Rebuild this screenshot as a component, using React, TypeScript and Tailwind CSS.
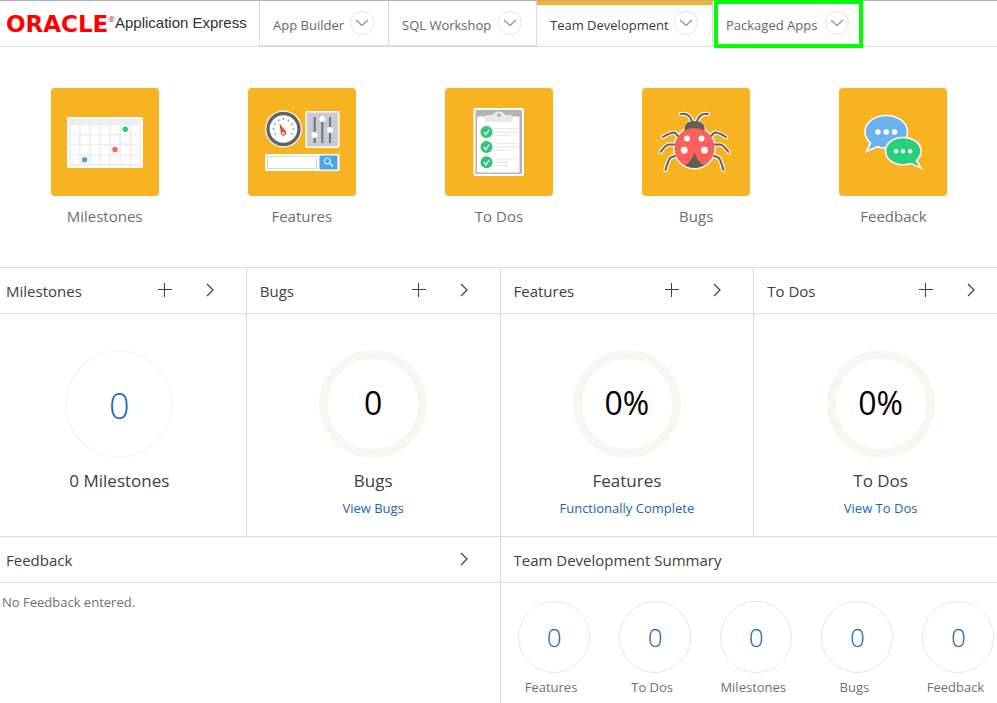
import React from "react";

function Chevron({ className = "" }: { className?: string }) {
  return (
    <svg className={className} width="8" height="14" viewBox="0 0 8 14" fill="none" stroke="currentColor" aria-hidden="true">
      <path d="M1 1 L7 7 L1 13" strokeWidth="1.2" />
    </svg>
  );
}

function Plus() {
  return (
    <svg width="14" height="14" viewBox="0 0 14 14" stroke="currentColor" aria-hidden="true">
      <path d="M0 6.5H14M6.5 0V14" strokeWidth="1" />
    </svg>
  );
}

type TabProps = { label: string; width: string; active?: boolean; highlighted?: boolean };

function Tab({ label, width, active, highlighted }: TabProps) {
  return (
    <div
      className={`relative flex shrink-0 items-center justify-between border-r border-[#dcdcdc] pl-[13px] pr-[14px] ${width} ${
        active ? "border-t-4 border-t-[#f8b323] pb-[5px]" : "border-b border-b-[#dcdcdc]"
      }`}
    >
      <a href="#" className={`pt-[3px] text-[13px] leading-[18px] whitespace-nowrap ${active ? "text-[#383838]" : "text-[#666]"}`}>
        {label}
      </a>
      <button
        type="button"
        aria-label={`${label} menu`}
        className="flex size-6 shrink-0 items-center justify-center rounded-full border border-[#e3e3de] text-[#9a9a9e]"
      >
        <svg width="14" height="8" viewBox="0 0 14 8" fill="none" stroke="currentColor" strokeWidth="1.4" aria-hidden="true">
          <path d="M1 1L7 6.600L13 1" />
        </svg>
      </button>
      {highlighted && <span className="pointer-events-none absolute -top-px right-0 -bottom-[3px] left-px border-4 border-[#00ff00]" />}
    </div>
  );
}

function CalendarIcon() {
  return (
    <svg viewBox="0 0 108 108" className="size-full" aria-hidden="true">
      <rect x="16" y="29" width="76" height="51" rx="1.500" fill="#fff" />
      <rect x="18" y="31" width="72" height="47" fill="#eee" />
      {[0, 1, 2, 3].map((r) =>
        [0, 1, 2, 3, 4, 5, 6].map((c) => (
          <rect key={`${r}-${c}`} x={19.6 + c * 10.1} y={37.2 + r * 10.1} width="8.400" height="8.600" fill="#fff" />
        ))
      )}
      <circle cx="74.300" cy="41.300" r="2.700" fill="#22cc77" />
      <circle cx="64" cy="61.500" r="2.700" fill="#fb605c" />
      <circle cx="33.600" cy="71.700" r="2.700" fill="#4aa5e8" />
    </svg>
  );
}

function FeaturesIcon() {
  return (
    <svg viewBox="0 0 108 108" className="size-full" aria-hidden="true">
      <circle cx="35.500" cy="41" r="18.500" fill="#fff" />
      <circle cx="35.500" cy="41" r="15.500" fill="#fff" stroke="#5e636e" strokeWidth="3.400" />
      {[-120, -90, -60, -30, 0, 30, 60, 90, 120].map((a) => (
        <rect key={a} x="34.900" y="30" width="1.200" height="2.200" fill="#8a8d95" transform={`rotate(${a} 35.5 41)`} />
      ))}
      <path d="M31.500 35.500L38 43.500A2.700 2.700 0 1 1 33 46Z" fill="#f0443e" />
      <circle cx="35.400" cy="45.200" r="1.200" fill="#fff" />
      <rect x="57.500" y="23" width="34" height="37" rx="1.500" fill="#fff" />
      <rect x="59" y="24.500" width="31" height="34" fill="#cacad3" />
      <path d="M66.700 29V55M74.300 29V55M82 29V55" stroke="#70798a" strokeWidth="2.200" />
      <circle cx="66.500" cy="47" r="2.900" fill="#fff" />
      <circle cx="74.300" cy="31" r="2.900" fill="#fff" />
      <circle cx="82" cy="42" r="2.900" fill="#fff" />
      <rect x="17" y="66" width="74.500" height="17" rx="1.500" fill="#fff" />
      <rect x="19.500" y="68.500" width="49" height="12" fill="#fff" stroke="#d9d9d3" />
      <rect x="71.500" y="67.500" width="18" height="14" fill="#4aa5e5" />
      <circle cx="79.300" cy="73" r="3" fill="none" stroke="#fff" />
      <path d="M81.500 75L85 78.500" stroke="#fff" strokeWidth="1.300" />
    </svg>
  );
}

function ClipboardIcon() {
  return (
    <svg viewBox="0 0 108 108" className="size-full" aria-hidden="true">
      <rect x="28.500" y="20" width="50.500" height="68" rx="1.500" fill="#fff" />
      <rect x="30.500" y="22" width="46.500" height="64" fill="#b4b4b6" />
      <path d="M34 28.500H73Q74.500 28.500 74.500 30V83Q74.500 84.500 73 84.500H34Q32 84.500 32 83V30Q32 28.500 34 28.500Z" fill="#fff" />
      <path d="M42 27H47.500Q49 23.500 53.800 23.500Q58.500 23.500 60 27H65.500Q68 27 68 30V34H40V30Q40 27 42 27Z" fill="#e9e9ea" />
      <circle cx="54" cy="27" r="1.800" fill="#aaa" />
      {[44, 59, 74.2].map((y, i) => (
        <g key={y}>
          <circle cx="41.500" cy={y} r="6" fill="#2fc671" />
          <path d={`M38.800 ${y}l2 2.600l3.400-5`} fill="none" stroke="#fff" strokeWidth="1.300" />
          <path d={`M51 ${y - 3.300}h22`} stroke="#eaeae6" strokeWidth="1.300" />
          <path d={`M51 ${y}h${i === 2 ? 12 : 22}`} stroke="#e8e8e4" strokeWidth="1.600" />
          <path d={`M51 ${y + 3.300}h${i === 2 ? 12 : 13}`} stroke="#e8e8e4" strokeWidth="1.300" />
        </g>
      ))}
    </svg>
  );
}

const legs =
  "M39 26Q47 24.500 50 33M66 26Q58 24.500 55 33M21 49Q28 44.500 32.500 44.500L36 48M18.500 64Q24 56.500 27 56.500H33M23.500 82Q26.500 71.500 28.500 69.500L33 68M84 49Q77 44.500 72.500 44.500L69 48M86.500 64Q81 56.500 78 56.500H72M81.500 82Q78.500 71.500 76.500 69.500L72 68";

function BugIcon() {
  return (
    <svg viewBox="0 0 108 108" className="size-full" aria-hidden="true">
      <path d={legs} fill="none" stroke="#fff" strokeWidth="4.200" strokeLinecap="round" />
      <path d="M41 46Q41 32 52.500 32Q64 32 64 46Z" fill="#fff" />
      <circle cx="52.500" cy="60" r="21.500" fill="#fff" />
      <path d={legs} fill="none" stroke="#626055" strokeWidth="2" strokeLinecap="round" />
      <path d="M42.500 43.500Q41 33 52.500 33Q64 33 62.500 43.500Z" fill="#626055" />
      <circle cx="52.500" cy="60" r="20" fill="#fb605c" />
      <path d="M52.500 64.500Q55.500 73.500 62 77.600Q52.500 82.500 43 77.600Q49.500 73.500 52.500 64.500Z" fill="#626055" />
      <circle cx="45" cy="50.500" r="3" fill="#fff" />
      <circle cx="59.500" cy="50.500" r="3" fill="#fff" />
      <circle cx="42.200" cy="62.200" r="3.400" fill="#fff" />
      <circle cx="62.500" cy="62.200" r="3.400" fill="#fff" />
    </svg>
  );
}

function ChatIcon() {
  return (
    <svg viewBox="0 0 108 108" className="size-full" aria-hidden="true">
      <path
        d="M47 27.500C59 27.500 68.500 34.500 68.500 44S59 60 47 60Q42.500 60 38.500 58.700L27.500 63.500L31.500 55C28 52 26 48.500 26 44C26 34.500 35.500 27.500 47 27.500Z"
        fill="#6bb3ee" stroke="#fff" strokeWidth="1.600"
      />
      <path
        d="M64 49.500C74 49.500 82 55 82 63Q82 68.500 77.500 72.500L82 80L72 75.600Q68.500 76.800 64 76.800C54.500 76.800 46.500 71 46.500 63S54.500 49.500 64 49.500Z"
        fill="#28cf7e" stroke="#fff" strokeWidth="1.600"
      />
      <g fill="#fff">
        <circle cx="39" cy="44" r="2.700" /><circle cx="47.300" cy="44" r="2.700" /><circle cx="55.600" cy="44" r="2.700" />
        <circle cx="57" cy="63.200" r="2.200" /><circle cx="64" cy="63.200" r="2.200" /><circle cx="71.200" cy="63.200" r="2.200" />
      </g>
    </svg>
  );
}

const tiles = [
  { label: "Milestones", icon: <CalendarIcon /> },
  { label: "Features", icon: <FeaturesIcon /> },
  { label: "To Dos", icon: <ClipboardIcon /> },
  { label: "Bugs", icon: <BugIcon /> },
  { label: "Feedback", icon: <ChatIcon /> },
];

function PanelHeader({ title, add = true, go = true }: { title: string; add?: boolean; go?: boolean }) {
  return (
    <div className="flex h-[46px] items-center border-b border-[#dcdcdc] pr-8 pb-[2px] pl-[13px] text-[#404040]">
      <h2 className="flex-1 pt-[2px] text-[15px] leading-6">{title}</h2>
      {add && (
        <button type="button" aria-label={`Add ${title}`} className="mr-[34px]">
          <Plus />
        </button>
      )}
      {go && (
        <button type="button" aria-label={`Open ${title}`}>
          <Chevron />
        </button>
      )}
    </div>
  );
}

function Metric({ title, value, link }: { title: string; value: string; link?: string }) {
  return (
    <section className="border-r border-b border-[#dcdcdc]">
      <PanelHeader title={title} />
      <div className="flex h-[222px] flex-col items-center pt-9">
        {link ? (
          <div className="flex size-[108px] items-center justify-center rounded-full border-9 border-[#f7f7f0] pb-[2px] text-[32px] leading-10 text-black">
            {value}
          </div>
        ) : (
          <a href="#" className="flex size-[108px] items-center justify-center rounded-full border-2 border-[#f7f7f0] pt-1 text-[36px] leading-10 font-light text-[#1a66b5]">
            {value}
          </a>
        )}
        <p className="mt-[11px] text-[17px] leading-6 text-[#404040]">{link ? title : `${value} ${title}`}</p>
        {link && (
          <a href="#" className="mt-[6px] text-[13px] leading-[18px] text-[#1a66b5]">
            {link}
          </a>
        )}
      </div>
    </section>
  );
}

export default function App() {
  return (
    <div className="flex min-h-screen flex-col overflow-hidden bg-white font-['Open_Sans','Noto_Sans',sans-serif]">
      <header className="flex h-[47px] border-t border-b border-t-[#b0b0b0] border-b-[#dcdcdc]">
        <a href="#" className="flex w-[260px] shrink-0 items-center border-r border-[#dcdcdc] pl-[6px]">
          <span className="font-['DejaVu_Sans',sans-serif] text-[23px] leading-6 font-bold text-[#ff0000]">ORACLE</span>
          <span className="self-start pt-3 text-[8px] leading-3 text-[#ff0000]">®</span>
          <span className="pb-[2px] font-['Liberation_Sans',sans-serif] text-[15px] leading-5 whitespace-nowrap text-[#303030]">Application Express</span>
        </a>
        <nav className="flex">
          <Tab label="App Builder" width="min-w-[129px]" />
          <Tab label="SQL Workshop" width="min-w-[148px]" />
          <Tab label="Team Development" width="min-w-[176px]" active />
          <Tab label="Packaged Apps" width="min-w-[151px]" highlighted />
        </nav>
      </header>

      <nav className="grid h-[220px] grid-cols-5 pt-[41px] pr-[5px] pl-[6px]">
        {tiles.map((t) => (
          <a key={t.label} href="#" className="flex flex-col items-center">
            <span className="size-[108px] overflow-hidden rounded-sm bg-[#f8b323]">{t.icon}</span>
            <span className="mt-2 text-[15px] leading-6 text-[#707070]">{t.label}</span>
          </a>
        ))}
      </nav>

      <main className="-mr-[11px] -ml-[7px] flex flex-1 flex-col border-t border-[#dcdcdc]">
        <div className="grid grid-cols-4">
          <Metric title="Milestones" value="0" />
          <Metric title="Bugs" value="0" link="View Bugs" />
          <Metric title="Features" value="0%" link="Functionally Complete" />
          <Metric title="To Dos" value="0%" link="View To Dos" />
        </div>
        <div className="grid flex-1 grid-cols-2">
          <section className="border-r border-[#dcdcdc]">
            <PanelHeader title="Feedback" add={false} />
            <p className="pt-[10px] pl-[9px] text-[13px] leading-[18px] text-[#707070]">No Feedback entered.</p>
          </section>
          <section>
            <PanelHeader title="Team Development Summary" add={false} go={false} />
            <div className="grid grid-cols-5 pt-[18px] pr-[2px]">
              {["Features", "To Dos", "Milestones", "Bugs", "Feedback"].map((label) => (
                <a key={label} href="#" className="flex flex-col items-center">
                  <span className="ml-[6px] flex size-[72px] items-center justify-center rounded-full border border-[#e6e6e0] text-[26px] leading-8 font-light text-[#1a66b5]">
                    0
                  </span>
                  <span className="mt-[5px] text-[13px] leading-[18px] text-[#707070]">{label}</span>
                </a>
              ))}
            </div>
          </section>
        </div>
      </main>
    </div>
  );
}
